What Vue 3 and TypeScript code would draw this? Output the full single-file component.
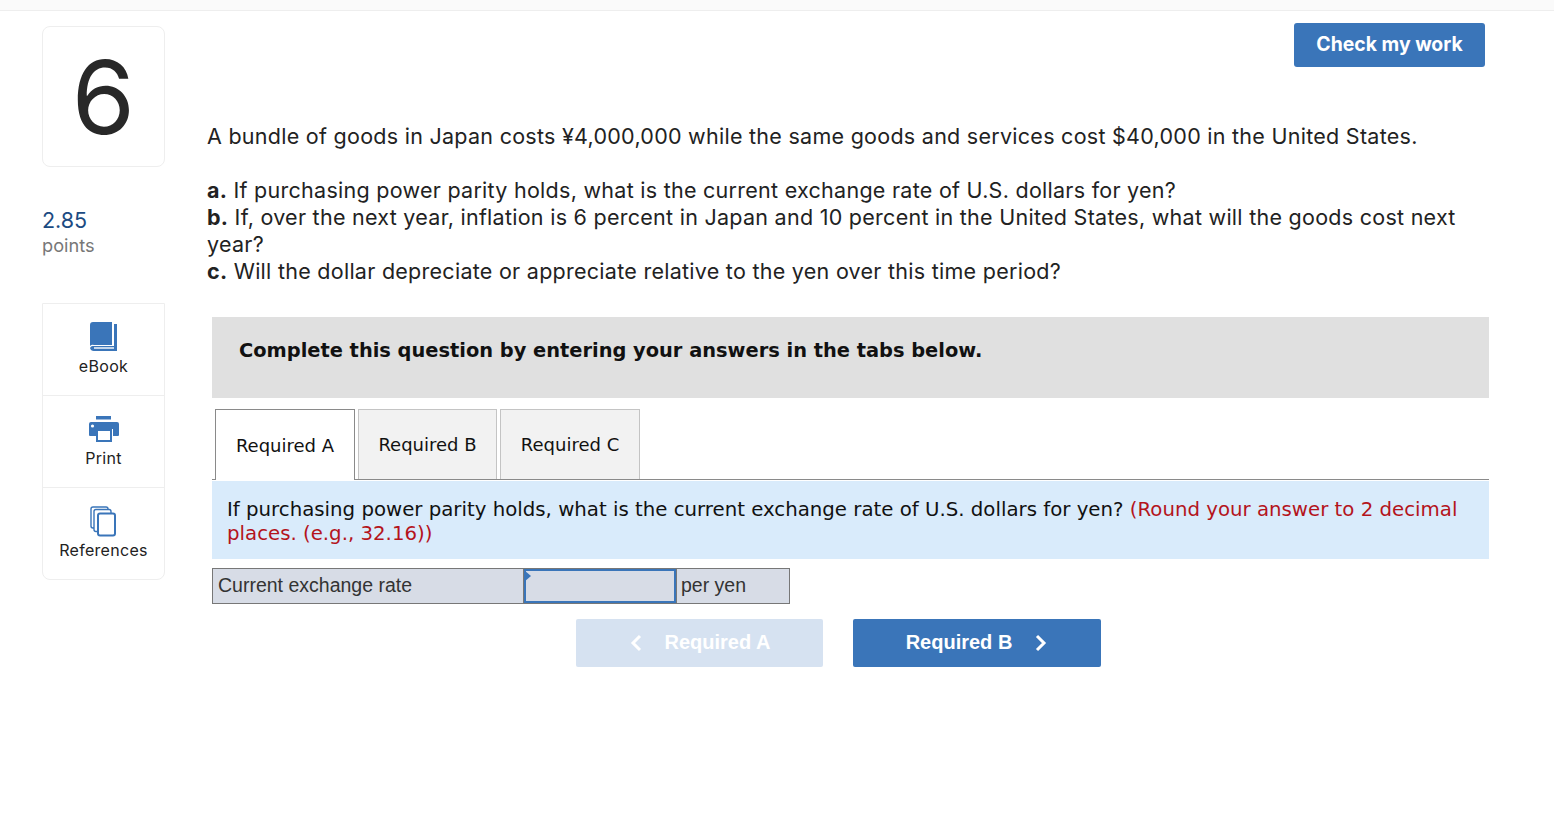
<script setup lang="ts">
import { ref } from 'vue'
const tabs = ['Required A', 'Required B', 'Required C']
const active = ref(0)
const answer = ref('')
</script>

<template>
  <div class="page">
    <div class="topbar"></div>
    <div class="layout">
      <aside class="side">
        <div class="num">6</div>
        <div class="score">2.85</div>
        <div class="pts">points</div>
        <div class="tools">
          <div class="tool">
            <svg width="30" height="32" viewBox="0 0 30 32">
              <path d="M1 25V4a3 3 0 0 1 3-3h19v23H5a4 4 0 0 0-4 1z" fill="#3a75b9" />
              <path d="M25 3h3v27H5a4 4 0 0 1-4-3 3 3 0 0 1 3-2h21z" fill="#3a75b9" />
              <path d="M5 27h20" stroke="#fff" stroke-width="1.4" />
            </svg>
            <span>eBook</span>
          </div>
          <div class="tool">
            <svg width="32" height="28" viewBox="0 0 32 28">
              <rect x="8" y="1" width="15" height="3.5" fill="#3a75b9" />
              <path d="M2 7h27a2 2 0 0 1 2 2v11a1 1 0 0 1-1 1h-5v-7H8v7H2a1 1 0 0 1-1-1V9a2 2 0 0 1 2-2z" fill="#3a75b9" />
              <circle cx="4.500" cy="11" r="1.600" fill="#fff" />
              <rect x="9" y="15" width="14" height="11" fill="#fff" stroke="#3a75b9" stroke-width="2" />
            </svg>
            <span>Print</span>
          </div>
          <div class="tool">
            <svg width="30" height="32" viewBox="0 0 30 32">
              <rect x="2" y="2" width="17" height="21" rx="2" fill="#fff" stroke="#3a75b9" stroke-width="1.400" />
              <rect x="5" y="4.500" width="17" height="22" rx="2" fill="#fff" stroke="#3a75b9" stroke-width="1.400" />
              <rect x="9" y="8.500" width="17" height="22" rx="2" fill="#fff" stroke="#3a75b9" stroke-width="2" />
            </svg>
            <span>References</span>
          </div>
        </div>
      </aside>

      <main class="main">
        <div class="head">
          <button class="check">Check my work</button>
        </div>
        <div class="question">
          <p class="lead">A bundle of goods in Japan costs ¥4,000,000 while the same goods and services cost $40,000 in the United States.</p>
          <p><b>a.</b> If purchasing power parity holds, what is the current exchange rate of U.S. dollars for yen?</p>
          <p><b>b.</b> If, over the next year, inflation is 6 percent in Japan and 10 percent in the United States, what will the goods cost next year?</p>
          <p><b>c.</b> Will the dollar depreciate or appreciate relative to the yen over this time period?</p>
        </div>
        <div class="body">
          <div class="banner">Complete this question by entering your answers in the tabs below.</div>
          <div class="tabs">
            <button
              v-for="(t, i) in tabs"
              :key="t"
              class="tab"
              :class="{ on: active === i }"
              @click="active = i"
            >{{ t }}</button>
          </div>
          <div class="prompt">
            If purchasing power parity holds, what is the current exchange rate of U.S. dollars for yen?
            <span class="red">(Round your answer to 2 decimal places. (e.g., 32.16))</span>
          </div>
          <div class="grid">
            <div class="cell label">Current exchange rate</div>
            <div class="cell entry"><input v-model="answer" aria-label="Current exchange rate" /></div>
            <div class="cell unit">per yen</div>
          </div>
          <div class="nav">
            <button class="navbtn off">
              <svg width="14" height="20" viewBox="0 0 14 20"><path d="M11 3 4 10l7 7" fill="none" stroke="#fff" stroke-width="3" /></svg>
              <span>Required A</span>
            </button>
            <button class="navbtn">
              <span>Required B</span>
              <svg width="14" height="20" viewBox="0 0 14 20"><path d="m3 3 7 7-7 7" fill="none" stroke="#fff" stroke-width="3" /></svg>
            </button>
          </div>
        </div>
      </main>
    </div>
  </div>
</template>

<style>
html, body { background: #fff; }
</style>

<style scoped>
.page {
  height: 819px;
  overflow: hidden;
  background: #fff;
  color: #222;
  font-family: "Inter", "Open Sans", sans-serif;
}
.topbar {
  height: 10px;
  background: #fafafa;
  border-bottom: 1px solid #eee;
}
.layout {
  display: flex;
  padding-left: 42px;
}
.side {
  width: 123px;
  flex: none;
  padding-top: 15px;
}
.num {
  box-sizing: border-box;
  height: 141px;
  border: 1px solid #eee;
  border-radius: 8px;
  display: flex;
  align-items: center;
  justify-content: center;
  font-size: 102px;
  font-weight: 400;
  line-height: 1;
  color: #282828;
}
.score {
  margin-top: 40px;
  font-size: 21.500px;
  line-height: 26px;
  color: #1c4b82;
}
.pts {
  font-size: 18.200px;
  line-height: 24px;
  color: #777;
}
.tools {
  margin-top: 46px;
  border: 1px solid #eee;
  border-radius: 0 0 8px 8px;
}
.tool {
  box-sizing: border-box;
  height: 92px;
  display: flex;
  flex-direction: column;
  align-items: center;
  padding-top: 17px;
  font-size: 16px;
  letter-spacing: 0.3px;
  color: #222;
  border-bottom: 1px solid #eee;
}
.tool:last-child { border-bottom: 0; height: 91px; }
.tool svg { display: block; height: 32px; margin-bottom: 2px; }
.tool span { line-height: 22px; }
.main {
  margin-left: 42px;
  flex: 1;
  min-width: 0;
}
.head {
  display: flex;
  justify-content: flex-end;
  padding: 12px 69px 0 0;
}
.check {
  width: 191px;
  height: 44px;
  border: 0;
  border-radius: 3px;
  background: #3a75b9;
  color: #fff;
  font: 700 19.400px "Inter", sans-serif;
  padding-bottom: 3px;
}
.question {
  margin-top: 56px;
  padding-right: 90px;
  font-size: 21.500px;
  letter-spacing: 0.27px;
  line-height: 27px;
}
.question p { margin: 0; }
.question .lead { margin-bottom: 27px; }
.body {
  margin: 32px 65px 0 5px;
}
.banner {
  box-sizing: border-box;
  height: 81px;
  background: #e0e0e0;
  padding: 20px 27px;
  font: 700 19.400px/28px "DejaVu Sans", sans-serif;
  color: #111;
}
.tabs {
  display: flex;
  gap: 3px;
  margin-top: 11px;
  height: 70px;
  padding-left: 3px;
  border-bottom: 1px solid #8a8a8a;
}
.tab {
  box-sizing: border-box;
  width: 139px;
  height: 70px;
  background: #f2f2f2;
  border: 1px solid #c4c4c4;
  border-bottom: 0;
  font: 18px "DejaVu Sans", sans-serif;
  color: #111;
}
.tab:last-child { width: 140px; }
.tab.on {
  width: 140px;
  height: 71px;
  background: #fff;
  border-color: #8a8a8a;
}
.prompt {
  margin-top: 1px;
  box-sizing: border-box;
  height: 78px;
  background: #d9ebfb;
  padding: 17px 15px 0;
  font: 19.760px/24px "DejaVu Sans", sans-serif;
  color: #111;
}
.red { color: #b4141c; }
.grid {
  display: flex;
  margin-top: 9px;
  height: 36px;
  width: 578px;
  box-sizing: border-box;
  border: 1px solid #777;
  background: #d7dce6;
  font: 19.500px "Liberation Sans", sans-serif;
  color: #333;
}
.cell { display: flex; align-items: center; padding-bottom: 2px; box-sizing: border-box; }
.label { width: 311px; padding-left: 5px; border-right: 1px solid #777; }
.entry { position: relative; width: 153px; padding-bottom: 0; border-right: 1px solid #777; }
.entry::before {
  content: "";
  position: absolute;
  z-index: 1;
  left: 0;
  top: 1px;
  border-left: 7px solid #3a75b9;
  border-top: 6px solid transparent;
  border-bottom: 6px solid transparent;
}
.entry input {
  width: 100%;
  height: 100%;
  box-sizing: border-box;
  background: transparent;
  border: 2px solid #3a75b9;
  outline: 0;
  padding: 0 4px;
}
.unit { padding-left: 4px; }
.nav {
  display: flex;
  justify-content: center;
  gap: 30px;
  margin-top: 15px;
  padding-right: 24px;
}
.navbtn {
  width: 248px;
  height: 48px;
  border: 0;
  border-radius: 2px;
  background: #3a75b9;
  color: #fff;
  font: 700 20px "Liberation Sans", sans-serif;
  display: flex;
  align-items: center;
  justify-content: center;
  gap: 22px;
  padding-bottom: 2px;
}
.navbtn.off { width: 247px; background: #d6e2f1; }
</style>
